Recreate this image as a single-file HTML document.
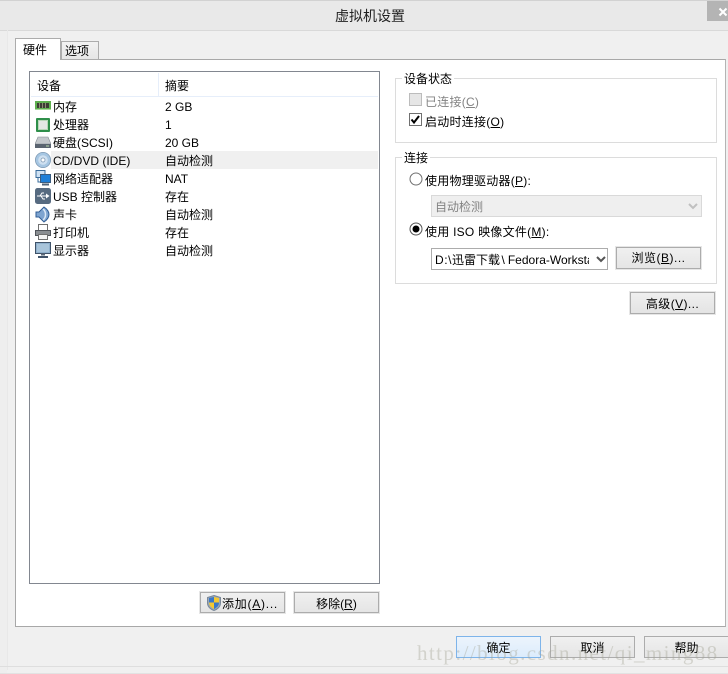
<!DOCTYPE html>
<html><head><meta charset="utf-8">
<style>
html,body{margin:0;padding:0;width:728px;height:674px;overflow:hidden;background:#f0f0f0}
body{position:relative;font-family:"Liberation Sans","Noto Sans CJK SC",sans-serif;font-size:12px;color:#000}
.a{position:absolute}
.t{position:absolute;white-space:nowrap;line-height:16px;height:16px}
.btn{position:absolute;box-sizing:border-box;border:1px solid #acacac;outline:1px solid #e6e6e6;background:linear-gradient(#f0f0f0,#e5e5e5);text-align:center;line-height:23px;white-space:nowrap}
u{text-decoration:underline}
.group{position:absolute;box-sizing:border-box;border:1px solid #dcdcdc;background:#fff}
.leg{position:absolute;background:#fff;padding:0 2px;line-height:16px;white-space:nowrap}
svg{position:absolute;display:block}
.sel{position:absolute;box-sizing:border-box;padding-left:3px;white-space:nowrap;overflow:hidden}
.ls{letter-spacing:.25px}
</style></head><body>
<div class="a" style="left:0;top:0;width:728px;height:30px;background:#e9e9e9;border-top:1px solid #d2d2d2;box-sizing:border-box"></div>
<div class="a" style="left:0;top:30px;width:728px;height:1px;background:#d9d9d9"></div>
<div class="a" style="left:0;top:31px;width:7px;height:643px;background:#eeeeee"></div>
<div class="a" style="left:7px;top:30px;width:1px;height:640px;background:#e8e8e8"></div>
<div class="t" style="left:335px;top:8px;font-size:14px;color:#222">虚拟机设置</div>
<div class="a" style="left:707px;top:1px;width:21px;height:20px;background:#b4b4b4"></div>
<svg style="left:718px;top:6px" width="10" height="11"><path d="M1.500 2.500L8.500 9.500M8.500 2.500L1.500 9.500" stroke="#fff" stroke-width="2"/></svg>

<!-- panel -->
<div class="a" style="left:15px;top:59px;width:711px;height:568px;box-sizing:border-box;background:#fff;border:1px solid #a8a8a8;border-right-color:#b4b4b4"></div>
<!-- tabs -->
<div class="a" style="left:61px;top:41px;width:38px;height:19px;box-sizing:border-box;background:linear-gradient(#f2f2f2,#e6e6e6);border:1px solid #acacac"></div>
<div class="t" style="left:65px;top:43px">选项</div>
<div class="a" style="left:15px;top:38px;width:46px;height:22px;box-sizing:border-box;background:#fff;border:1px solid #acacac;border-bottom:none"></div>
<div class="t" style="left:23px;top:42px">硬件</div>

<!-- list -->
<div class="a" style="left:29px;top:71px;width:351px;height:513px;box-sizing:border-box;background:#fff;border:1px solid #828790"></div>
<div class="a" style="left:31px;top:96px;width:347px;height:1px;background:#e6eefa"></div>
<div class="a" style="left:158px;top:73px;width:1px;height:23px;background:#e6eefa"></div>
<div class="t" style="left:37px;top:78px">设备</div>
<div class="t" style="left:165px;top:78px">摘要</div>
<div class="a" style="left:51px;top:151px;width:327px;height:18px;background:#f0f0f0"></div>

<div class="t" style="left:53px;top:99px">内存</div><div class="t" style="left:165px;top:99px">2 GB</div>
<div class="t" style="left:53px;top:117px">处理器</div><div class="t" style="left:165px;top:117px">1</div>
<div class="t" style="left:53px;top:135px">硬盘(SCSI)</div><div class="t" style="left:165px;top:135px">20 GB</div>
<div class="t" style="left:53px;top:153px">CD/DVD (IDE)</div><div class="t" style="left:165px;top:153px">自动检测</div>
<div class="t" style="left:53px;top:171px">网络适配器</div><div class="t" style="left:165px;top:171px">NAT</div>
<div class="t" style="left:53px;top:189px">USB 控制器</div><div class="t" style="left:165px;top:189px">存在</div>
<div class="t" style="left:53px;top:207px">声卡</div><div class="t" style="left:165px;top:207px">自动检测</div>
<div class="t" style="left:53px;top:225px">打印机</div><div class="t" style="left:165px;top:225px">存在</div>
<div class="t" style="left:53px;top:243px">显示器</div><div class="t" style="left:165px;top:243px">自动检测</div>

<!-- icons -->
<svg style="left:35px;top:101px" width="16" height="10"><rect x="0" y="0" width="16" height="9" fill="#5fb04f"/><rect x="2" y="2" width="12" height="5" fill="#3c3c34"/><path d="M4.500 2v5M7.500 2v5M10.500 2v5" stroke="#8a8a70"/><path d="M0 8.500h16" stroke="#a8d89a"/></svg>
<svg style="left:36px;top:118px" width="14" height="14"><rect x="0" y="0" width="14" height="14" rx="1" fill="#2f8f4a"/><rect x="2.500" y="2.500" width="9" height="9" fill="#e4e8e4" stroke="#b8d8b8"/></svg>
<svg style="left:35px;top:136px" width="16" height="13"><path d="M3 1h10l3 7H0z" fill="#c4c8cc" stroke="#808890" stroke-width=".6"/><rect x="0" y="8" width="16" height="4" fill="#5a6470"/><rect x="11" y="9.500" width="3" height="1" fill="#b8d8a8"/></svg>
<svg style="left:35px;top:152px" width="16" height="16"><circle cx="8" cy="8" r="7.600" fill="#a6c6e2" stroke="#7f9ab4" stroke-width=".8"/><circle cx="8" cy="8" r="4.800" fill="#cfe0f0"/><circle cx="8" cy="8" r="2" fill="#fff" stroke="#7f9ab4" stroke-width=".8"/></svg>
<svg style="left:35px;top:170px" width="17" height="16"><rect x="1" y="0.500" width="9" height="7" fill="#cfe2f4" stroke="#3a6c9c"/><rect x="5.500" y="4.500" width="10" height="8" fill="#1e7fd8" stroke="#3a5c80"/><path d="M7 14.500h7" stroke="#50647a" stroke-width="2"/><path d="M3 8v4h2" stroke="#3a6c9c" fill="none"/></svg>
<svg style="left:35px;top:188px" width="16" height="16"><rect width="16" height="16" rx="2.500" fill="#566a80"/><path d="M2 8h10" stroke="#fff"/><path d="M11 5.500l3.500 2.500-3.500 2.500z" fill="#fff"/><path d="M5 8l2-3h2M6 8l2 3h2" stroke="#fff" fill="none"/></svg>
<svg style="left:35px;top:206px" width="16" height="17"><path d="M1 6h3l5-5c3 2 5 4 5 7.500S12 14 9 16L4 11H1z" fill="#7ea4d0" stroke="#2f5c94"/><path d="M8 3c2 1.500 2.500 3.500 2.500 5.500S10 12.500 8 14" stroke="#dbe8f6" fill="none" stroke-width="1.500"/></svg>
<svg style="left:35px;top:224px" width="16" height="16"><rect x="3.500" y="0.500" width="9" height="6" fill="#fff" stroke="#707070"/><rect x="0.500" y="6.500" width="15" height="5" fill="#8a8e92" stroke="#50545a"/><rect x="3.500" y="10.500" width="9" height="5" fill="#f4f4f4" stroke="#707070"/></svg>
<svg style="left:35px;top:242px" width="16" height="16"><rect x="0.500" y="0.500" width="15" height="11" fill="#8fb0cc" stroke="#3f5268"/><rect x="2" y="2" width="12" height="8" fill="#a8c4da"/><path d="M6 12.500h4" stroke="#5a6878" stroke-width="2"/><path d="M3 15h10" stroke="#3f5268" stroke-width="2"/></svg>

<!-- list buttons -->
<div class="btn" style="left:200px;top:592px;width:85px;height:21px;text-align:left;padding-left:21px;letter-spacing:.75px">添加(<u>A</u>)...</div>
<svg style="left:207px;top:595px" width="14" height="16"><path d="M7 0.500L13.500 2.500V8C13.500 12 10 14.500 7 15.500C4 14.500 .5 12 .5 8V2.500z" fill="#9aa8b8" stroke="#7a8898"/><path d="M7 2v5.500H2V3z" fill="#3b78c8"/><path d="M7 2l5 1v4.500H7z" fill="#f4c832"/><path d="M7 7.500h5C12 11 9 13 7 14z" fill="#3b78c8"/><path d="M7 7.500H2C2 11 5 13 7 14z" fill="#f4c832"/></svg>
<div class="btn" style="left:294px;top:592px;width:85px;height:21px">移除(<u>R</u>)</div>

<!-- group 1 -->
<div class="group" style="left:395px;top:78px;width:322px;height:65px"></div>
<div class="leg" style="left:402px;top:71px">设备状态</div>
<div class="a" style="left:409px;top:93px;width:13px;height:13px;box-sizing:border-box;background:#e6e6e6;border:1px solid #bcbcbc"></div>
<div class="t ls" style="left:425px;top:94px;color:#838383">已连接(<u>C</u>)</div>
<div class="a" style="left:409px;top:113px;width:13px;height:13px;box-sizing:border-box;background:#fff;border:1px solid #707070"></div>
<svg style="left:409px;top:113px" width="13" height="13"><path d="M2.500 6.500L5 9.500L10 3" stroke="#000" stroke-width="2" fill="none"/></svg>
<div class="t ls" style="left:425px;top:114px">启动时连接(<u>O</u>)</div>

<!-- group 2 -->
<div class="group" style="left:395px;top:157px;width:322px;height:127px"></div>
<div class="leg" style="left:402px;top:150px">连接</div>
<svg style="left:409px;top:172px" width="14" height="14"><circle cx="7" cy="7" r="6" fill="#fff" stroke="#707070"/></svg>
<div class="t ls" style="left:425px;top:173px">使用物理驱动器(<u>P</u>):</div>
<div class="sel" style="left:431px;top:195px;width:271px;height:22px;line-height:23px;background:#efefef;border:1px solid #d9d9d9;color:#838383">自动检测</div>
<svg style="left:688px;top:203px" width="10" height="7"><path d="M1 1L5 5L9 1" stroke="#c0c0c0" stroke-width="2" fill="none"/></svg>
<svg style="left:409px;top:222px" width="14" height="14"><circle cx="7" cy="7" r="6" fill="#fff" stroke="#555"/><circle cx="7" cy="7" r="3.500" fill="#000"/></svg>
<div class="t ls" style="left:425px;top:224px">使用 ISO 映像文件(<u>M</u>):</div>
<div class="sel" style="left:431px;top:248px;width:177px;height:22px;line-height:23px;background:#fff;border:1px solid #acacac"><span style="display:block;width:154px;overflow:hidden"><span style="letter-spacing:.55px">D:\</span>迅雷下载<span style="margin:0 3px 0 1.500px">\</span>Fedora-Workstation</span></div>
<svg style="left:596px;top:256px" width="10" height="7"><path d="M1 1L5 5L9 1" stroke="#555" stroke-width="2" fill="none"/></svg>
<div class="btn" style="left:616px;top:247px;width:85px;height:22px;line-height:21px;letter-spacing:.5px">浏览(<u>B</u>)...</div>

<div class="btn" style="left:630px;top:292px;width:85px;height:22px;letter-spacing:.4px;background:linear-gradient(#efefef,#e4e4e4)">高级(<u>V</u>)...</div>

<!-- bottom -->
<div class="a" style="left:0;top:666px;width:728px;height:1px;background:#dedede"></div>
<div class="a" style="left:0;top:673px;width:728px;height:1px;background:#e2e2e2"></div>
<div class="btn" style="left:456px;top:636px;width:85px;height:22px;border-color:#7eb4ea;outline:none;background:linear-gradient(#ecf4fc,#dcecfc)">确定</div>
<div class="btn" style="left:550px;top:636px;width:85px;height:22px;outline:none">取消</div>
<div class="btn" style="left:644px;top:636px;width:85px;height:22px;outline:none">帮助</div>
<div class="t" style="left:417px;top:643px;height:20px;line-height:20px;font-family:'Liberation Serif',serif;font-size:21px;letter-spacing:1.42px;color:rgba(165,165,150,.4)">http://blog.csdn.net/qi_ming88</div>
</body></html>
